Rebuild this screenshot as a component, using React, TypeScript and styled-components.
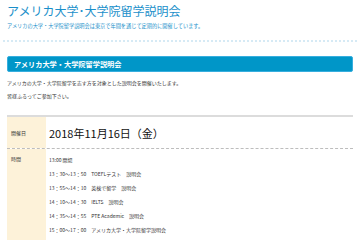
import styled, { createGlobalStyle } from "styled-components";

const GlobalStyle = createGlobalStyle`
  html, body {
    margin: 0;
    padding: 0;
    background: #ffffff;
  }
  body {
    font-family: "Noto Sans CJK JP", "Noto Sans", sans-serif;
    color: #333333;
  }
`;

const Page = styled.div`
  width: 360px;
  height: 240px;
  overflow: hidden;
`;

const Header = styled.header`
  margin: 0 3px;
  padding: 0 4px;
  height: 40px;
  border-bottom: 2px dotted #d6eaf5;
`;

const Title = styled.h1`
  margin: 0;
  font-size: 12px;
  line-height: 21px;
  font-weight: 400;
  color: #1a8fca;
`;

const Lead = styled.p`
  margin: 1px 0 0;
  font-size: 5.2px;
  line-height: 7px;
  color: #1a8fca;
`;

const Main = styled.main`
  padding: 14px 7px 0;
`;

const SectionBar = styled.h2`
  margin: 0;
  height: 16px;
  display: flex;
  align-items: center;
  padding: 0 6px;
  background: #0096c8;
  border: 1px solid #37aede;
  border-radius: 2px;
  color: #ffffff;
  font-size: 7.2px;
  font-weight: 700;
  box-sizing: border-box;
`;

const Body = styled.div`
  padding: 7px 0 0;
`;

const Para = styled.p`
  margin: 0 0 6px;
  font-size: 5px;
  line-height: 7px;
`;

const Table = styled.div`
  margin-top: 16px;
  border-top: 2px solid #dcdcdc;
`;

const Row = styled.div<{ $last?: boolean }>`
  display: grid;
  grid-template-columns: 39px 1fr;
  border-bottom: ${(p) => (p.$last ? "none" : "1px dashed #bdbdbd")};
`;

const Label = styled.div<{ $top?: boolean }>`
  background: #fdf2d9;
  font-size: 5px;
  line-height: 7px;
  padding: ${(p) => (p.$top ? "5.5px 4px 0" : "0 4px")};
  display: flex;
  align-items: ${(p) => (p.$top ? "flex-start" : "center")};
`;

const DateCell = styled.div`
  height: 31px;
  display: flex;
  align-items: center;
  padding-left: 3px;
  font-size: 11px;
  color: #111111;
`;

const TimeList = styled.ul`
  list-style: none;
  margin: 0;
  padding: 6.5px 0 6px 3px;
  height: 82px;
`;

const TimeItem = styled.li`
  font-size: 5px;
  line-height: 7px;
  margin-bottom: 7.2px;
  white-space: pre;
`;

const times = [
  "13:00 開場",
  "13：30〜13：50　TOEFLテスト　説明会",
  "13：55〜14：10　英検で留学　説明会",
  "14：10〜14：30　IELTS　説明会",
  "14：35〜14：55　PTE Academic　説明会",
  "15：00〜17：00　アメリカ大学・大学院留学説明会",
];

export default function App() {
  return (
    <Page>
      <GlobalStyle />
      <Header>
        <Title>アメリカ大学･大学院留学説明会</Title>
        <Lead>アメリカの大学・大学院留学説明会は東京で年間を通じて定期的に開催しています。</Lead>
      </Header>
      <Main>
        <SectionBar>アメリカ大学・大学院留学説明会</SectionBar>
        <Body>
          <Para>アメリカの大学・大学院留学を志す方を対象とした説明会を開催いたします。</Para>
          <Para>皆様ふるってご参加下さい。</Para>
        </Body>
        <Table>
          <Row>
            <Label>開催日</Label>
            <DateCell>2018年11月16日（金）</DateCell>
          </Row>
          <Row $last>
            <Label $top>時間</Label>
            <TimeList>
              {times.map((t) => (
                <TimeItem key={t}>{t}</TimeItem>
              ))}
            </TimeList>
          </Row>
        </Table>
      </Main>
    </Page>
  );
}
